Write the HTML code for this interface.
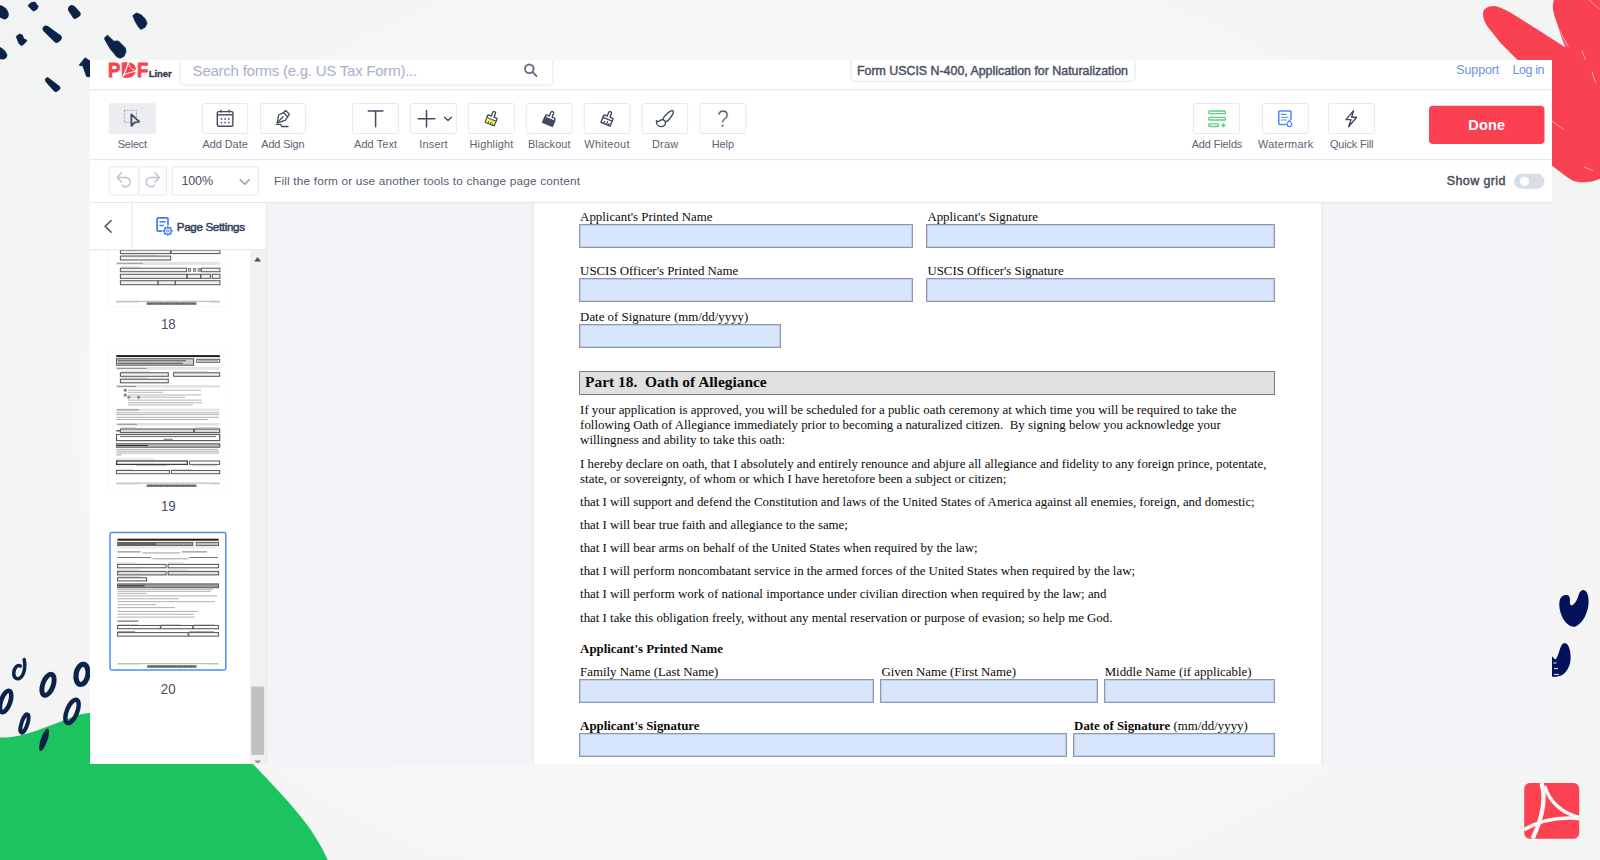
<!DOCTYPE html>
<html lang="en">
<head>
<meta charset="utf-8">
<title>Form USCIS N-400, Application for Naturalization</title>
<style>
*{box-sizing:border-box;margin:0;padding:0}
html,body{width:1600px;height:860px;overflow:hidden}
body{position:relative;font-family:"Liberation Sans",sans-serif;background:#f4f5f5;color:#3f4656}
#bg{position:absolute;left:0;top:0;width:1600px;height:860px;background:radial-gradient(ellipse 62% 78% at 50% 50%,#f9f9f9 0%,#f7f7f7 50%,#f5f5f5 78%,#f2f3f3 100%)}
svg{position:absolute;left:0;top:0;width:1600px;height:860px;overflow:hidden}
svg text{font-family:"Liberation Sans",sans-serif;white-space:pre}
#app{position:absolute;left:90px;top:60px;width:1462px;height:704px;background:#fff;overflow:hidden}
#side{position:absolute;left:0;top:143px;width:176px;height:561px;background:#fff}
#doc{position:absolute;left:177px;top:143px;width:1285px;height:561px;background:#f3f4f8}
#pg{position:absolute;left:267px;top:0;width:787px;height:561px;background:#fff;font-family:"Liberation Serif",serif;color:#000;font-size:12.86px;overflow:hidden;box-shadow:0 0 4px rgba(120,130,160,.18)}
#pg .t{position:absolute;white-space:nowrap;line-height:16px;color:#0a0a0a}
#pg .b{font-weight:bold}
#pg .f{position:absolute;background:#d7e6fd;border:1px solid #9496a2;box-shadow:inset 0 0 0 1px #b9cdf7}
#pg .hd{position:absolute;background:#e0e0e0;border:1px solid #7c7c7c}
</style>
</head>
<body>
<div id="bg"></div>
<svg id="deco" viewBox="0 0 1600 860">
<path d="M0 5.2 C4 5.5 8.6 10 8.8 14.6 C8.6 18 6 20 3.6 19.2 L0 17.4 Z" fill="#0b2348"/>
<path d="M28 5.4 L31.4 2.6 L35 2 L38.2 6.6 L36.8 9.4 L33.4 11 L30.6 8.6 Z" fill="#0b2348" stroke="#0b2348" stroke-width="0.8" stroke-linejoin="round"/>
<path transform="translate(73.9,11.6) rotate(52)" d="M-3.3 -3.9 L4.0 -4.6 Q7.2 -4.6 7.2 -0.9 L6.6 3.4 Q6.1 4.8 4.3 4.6 L-3.3 3.9 Q-7.2 3.5 -7.2 0 Q-7.2 -3.5 -3.3 -3.9 Z" fill="#0b2348"/>
<path d="M132.8 15.6 L136.6 13 L141 14.8 L145.4 19 L147 23.4 L145.2 27.2 L141 29.4 L138.8 27.4 L135.2 21.6 Z" fill="#0b2348" stroke="#0b2348" stroke-width="0.8" stroke-linejoin="round"/>
<path transform="translate(51.8,33.8) rotate(40)" d="M-7.6 -3.4 L7.8 -4.5 Q11.0 -4.5 11.0 -0.9 L10.1 3.4 Q9.3 4.7 6.6 4.5 L-7.6 3.4 Q-11.0 3.0 -11.0 0 Q-11.0 -3.0 -7.6 -3.4 Z" fill="#0b2348"/>
<path d="M16.2 36.4 L19.4 34 L22.4 35 L23.6 38.6 L27 40.4 L24.6 43.4 L21.4 45.8 L18.8 43.2 L17.4 39.6 Z" fill="#0b2348" stroke="#0b2348" stroke-width="0.8" stroke-linejoin="round"/>
<path d="M0 47 C3.4 48.4 6.8 52.4 7.3 55.4 C6.8 58 4.2 59.8 1.6 59.4 L0 59 Z" fill="#0b2348"/>
<path d="M104.8 37.6 L107.6 35.2 L113.8 41.2 L118.4 41 L125.4 48 L126 51.6 L124 56.4 L120 58.2 L116.8 56.8 L110 48.6 L104.8 39.6 Z" fill="#0b2348" stroke="#0b2348" stroke-width="0.8" stroke-linejoin="round"/>
<path d="M85 57.8 L90 61 L90 76.8 L86.6 76.4 L82.8 65.8 L79.2 65.2 Z" fill="#0b2348" stroke="#0b2348" stroke-width="0.8" stroke-linejoin="round"/>
<path transform="translate(52.2,84.4) rotate(43)" d="M-6.4 -2.6 L6.4 -3.8 Q9.0 -3.8 9.0 -0.8 L8.3 2.8 Q7.6 3.9 5.4 3.8 L-6.4 2.6 Q-9.0 2.4 -9.0 0 Q-9.0 -2.4 -6.4 -2.6 Z" fill="#0b2348"/>
<path d="M1483 13.4 C1483 8.6 1489 5 1496 6.2 C1502 7.6 1508 11 1514 14.8 L1533.5 27 L1565.6 47.6 C1562 39 1559.6 32 1557.6 25 C1554 15 1551 7 1554 0 L1600 0 L1600 178.8 C1592 182.6 1581 183.4 1573.4 181 C1566 176.6 1558 170.6 1550 164 L1540 150 L1540 70 L1517 59.6 L1500.6 43 L1487.4 26.6 C1484.6 22 1483 17.6 1483 13.4 Z" fill="#f94152"/>
<g stroke="#fbd3d7" stroke-width="0.7" fill="none" stroke-linecap="round"><path d="M1558.8 29 L1568.2 46.8"/><path d="M1582 51 L1585.4 59.4"/><path d="M1592.2 72 C1593 76 1594.4 80 1596 82.6"/><path d="M1552 121 L1563.4 129.2"/><path d="M1584.6 167.2 L1592.6 170.6"/><path d="M1589 0 L1600 9.4"/></g>
<path d="M0 737.6 C12 737.8 24 735 38.4 729.9 C50 725.8 64 720.2 76.7 715.5 C82 713.8 88 712.9 96 712.6 L256 700 L252.7 763.7 C268 780 291.6 804 307.6 825.4 C318 840 324 851 327.6 860 L0 860 Z" fill="#1bc45e"/>
<path d="M24.2 659.6 C25.6 665 24.8 674 20.6 677.6 C17 680.4 13.4 678 13.8 672.6 C14.2 667.6 17.6 664.2 20.4 666" fill="none" stroke="#0b2348" stroke-width="3.5" stroke-linecap="round"/>
<ellipse transform="translate(48,684.8) rotate(20)" rx="5.2" ry="11" fill="none" stroke="#0b2348" stroke-width="4.9"/>
<ellipse transform="translate(82,674.4) rotate(10)" rx="5.9" ry="10.2" fill="none" stroke="#0b2348" stroke-width="5.2"/>
<ellipse transform="translate(5.6,701.5) rotate(19)" rx="4.6" ry="11.2" fill="none" stroke="#0b2348" stroke-width="4.6"/>
<ellipse transform="translate(72,711.4) rotate(22)" rx="5.2" ry="12.4" fill="none" stroke="#0b2348" stroke-width="4.4"/>
<ellipse transform="translate(24.5,723.5) rotate(18)" rx="3" ry="9.6" fill="none" stroke="#0b2348" stroke-width="3.9"/>
<ellipse transform="translate(44.1,739.8) rotate(19)" rx="3.3" ry="11.8" fill="#0b2348"/>
<path d="M1565.6 595 C1568.4 594.6 1570 596.6 1570 599.6 C1569.6 602.6 1570 605 1571.4 605.6 C1575 604.6 1577.6 599 1578.6 595 C1579.6 591.6 1581.6 590 1583.6 590 C1587.6 590.6 1588.8 597 1588.6 603 C1588 612 1583.6 622.6 1575.6 626.4 C1571 627.6 1565.6 624 1562.2 617 C1559 610 1558 600.6 1561.4 597 C1562.6 595.8 1564 595.2 1565.6 595 Z" fill="#03125b"/>
<path d="M1551.8 655.6 C1553 658 1554.6 659.6 1556 659 C1558.6 656 1559.6 648 1562 644.6 C1563.6 642.8 1566.4 642.8 1567.8 645 C1570.4 649 1571 656 1570.4 661 C1569.6 667 1566.6 672 1562.6 674.8 C1559.6 676.6 1555.6 677 1551.8 676.8 Z" fill="#03125b"/>
<g stroke="#f3f4f8" stroke-width="1" fill="none"><path d="M1553.4 663 H1556.4"/><path d="M1554 668.6 H1558"/><path d="M1554 674.4 H1559"/></g>
<rect x="1524.2" y="783.1" width="55" height="55.6" rx="5.5" fill="#fb4252"/>
<g fill="none" stroke="#f5f6f6" stroke-linecap="butt"><path d="M1541.6 783 C1545 796 1545 812 1532.6 838.6" stroke-width="4.4"/><path d="M1544.6 786 C1549 800 1560 813 1579.4 817.4" stroke-width="3.6"/><path d="M1524 829.6 C1540 820.6 1560 816.6 1579.4 818.6" stroke-width="3.6"/></g>
</svg>
<div id="app">
  <div id="side"></div>
  <div id="doc">
    <div id="pg">
      <div class="t" style="left:46.1px;top:5.96px">Applicant's Printed Name</div>
      <div class="t" style="left:393.4px;top:5.96px">Applicant's Signature</div>
      <div class="f" style="left:45px;top:21px;width:334px;height:24px"></div>
      <div class="f" style="left:392px;top:21px;width:349px;height:24px"></div>
      <div class="t" style="left:46.1px;top:59.96px">USCIS Officer's Printed Name</div>
      <div class="t" style="left:393.4px;top:59.96px">USCIS Officer's Signature</div>
      <div class="f" style="left:45px;top:75px;width:334px;height:24px"></div>
      <div class="f" style="left:392px;top:75px;width:349px;height:24px"></div>
      <div class="t" style="left:46.1px;top:105.96px">Date of Signature (mm/dd/yyyy)</div>
      <div class="f" style="left:45px;top:121px;width:202px;height:24px"></div>
      <div class="hd" style="left:45px;top:168px;width:696px;height:24px"></div>
      <div class="t b" style="left:51.1px;top:171.09px;font-size:15.43px">Part 18.&nbsp; Oath of Allegiance</div>
      <div class="t" style="left:46.1px;top:198.96px">If your application is approved, you will be scheduled for a public oath ceremony at which time you will be required to take the</div>
      <div class="t" style="left:46.1px;top:213.96px">following Oath of Allegiance immediately prior to becoming a naturalized citizen.&nbsp; By signing below you acknowledge your</div>
      <div class="t" style="left:46.1px;top:228.96px">willingness and ability to take this oath:</div>
      <div class="t" style="left:46.1px;top:252.96px">I hereby declare on oath, that I absolutely and entirely renounce and abjure all allegiance and fidelity to any foreign prince, potentate,</div>
      <div class="t" style="left:46.1px;top:267.96px">state, or sovereignty, of whom or which I have heretofore been a subject or citizen;</div>
      <div class="t" style="left:46.1px;top:290.96px">that I will support and defend the Constitution and laws of the United States of America against all enemies, foreign, and domestic;</div>
      <div class="t" style="left:46.1px;top:313.96px">that I will bear true faith and allegiance to the same;</div>
      <div class="t" style="left:46.1px;top:336.96px">that I will bear arms on behalf of the United States when required by the law;</div>
      <div class="t" style="left:46.1px;top:359.96px">that I will perform noncombatant service in the armed forces of the United States when required by the law;</div>
      <div class="t" style="left:46.1px;top:382.96px">that I will perform work of national importance under civilian direction when required by the law; and</div>
      <div class="t" style="left:46.1px;top:406.96px">that I take this obligation freely, without any mental reservation or purpose of evasion; so help me God.</div>
      <div class="t b" style="left:46.1px;top:437.96px">Applicant's Printed Name</div>
      <div class="t" style="left:46.1px;top:460.96px">Family Name (Last Name)</div>
      <div class="t" style="left:347.4px;top:460.96px">Given Name (First Name)</div>
      <div class="t" style="left:570.7px;top:460.96px">Middle Name (if applicable)</div>
      <div class="f" style="left:45px;top:476px;width:295px;height:24px"></div>
      <div class="f" style="left:346px;top:476px;width:218px;height:24px"></div>
      <div class="f" style="left:570px;top:476px;width:171px;height:24px"></div>
      <div class="t b" style="left:46.1px;top:514.96px">Applicant's Signature</div>
      <div class="t" style="left:540.1px;top:514.96px"><b>Date of Signature</b> (mm/dd/yyyy)</div>
      <div class="f" style="left:45px;top:530px;width:488px;height:24px"></div>
      <div class="f" style="left:539px;top:530px;width:202px;height:24px"></div>
    </div>
  </div>
</div>
<svg id="thumbs" viewBox="0 0 1600 860">
<defs><clipPath id="sideclip"><rect x="90" y="250" width="160" height="514"/></clipPath></defs>
<g clip-path="url(#sideclip)">
<rect x="108.4" y="166.6" width="118.6" height="140.4" rx="2.4" fill="#eef0f6"/><rect x="109" y="167" width="117.6" height="139.6" rx="2" fill="#fff"/>
<rect x="120.4" y="250.2" width="50.0" height="3.4" fill="#f2f2f2" stroke="#5c5c5c" stroke-width="1.05"/>
<rect x="171.2" y="250.2" width="48.7" height="3.4" fill="#f2f2f2" stroke="#5c5c5c" stroke-width="1.05"/>
<path d="M122 255.2 H158" stroke="#bdbdbd" stroke-width="0.6" fill="none"/>
<rect x="120.4" y="256.1" width="50.3" height="3.9" fill="#f2f2f2" stroke="#5c5c5c" stroke-width="1.05"/>
<rect x="116" y="261.9" width="103.8" height="2.9" fill="#e3e3e3"/>
<path d="M117 263.4 H143" stroke="#8a8a8a" stroke-width="0.8" fill="none"/>
<path d="M121 267 H140" stroke="#c4c4c4" stroke-width="0.6" fill="none"/>
<rect x="120.4" y="268.2" width="66.2" height="3.5" fill="#f2f2f2" stroke="#5c5c5c" stroke-width="1.05"/>
<rect x="188.4" y="268.6" width="2.4" height="2.8" fill="#bbb" stroke="#5c5c5c" stroke-width="0.6"/>
<rect x="193.4" y="268.6" width="2.4" height="2.8" fill="#bbb" stroke="#5c5c5c" stroke-width="0.6"/>
<rect x="198" y="268.6" width="2.4" height="2.8" fill="#bbb" stroke="#5c5c5c" stroke-width="0.6"/>
<rect x="201.3" y="268.2" width="18.6" height="3.5" fill="#f2f2f2" stroke="#5c5c5c" stroke-width="1.05"/>
<rect x="120.4" y="274.3" width="66.4" height="4.1" fill="#f2f2f2" stroke="#5c5c5c" stroke-width="1.05"/>
<rect x="187.4" y="274.3" width="13.4" height="4.1" fill="#f2f2f2" stroke="#5c5c5c" stroke-width="1.05"/>
<rect x="201" y="274.3" width="9.4" height="4.1" fill="#f2f2f2" stroke="#5c5c5c" stroke-width="1.05"/>
<rect x="212.3" y="274.3" width="7.6" height="4.1" fill="#f2f2f2" stroke="#5c5c5c" stroke-width="1.05"/>
<rect x="120.4" y="280.7" width="37.6" height="4.0" fill="#f2f2f2" stroke="#5c5c5c" stroke-width="1.05"/>
<rect x="158.2" y="280.7" width="17.0" height="4.0" fill="#f2f2f2" stroke="#5c5c5c" stroke-width="1.05"/>
<rect x="175.4" y="280.7" width="44.5" height="4.0" fill="#f2f2f2" stroke="#5c5c5c" stroke-width="1.05"/>
<path d="M116 301.3 H219.8" stroke="#8c8c8c" stroke-width="0.7" fill="none"/>
<path d="M116 302.4 H138" stroke="#c9c9c9" stroke-width="0.6" fill="none"/>
<path d="M210 302.4 H219.8" stroke="#c9c9c9" stroke-width="0.6" fill="none"/>
<rect x="146.6" y="302.3" width="49.8" height="2.5" fill="#3a3a3a" opacity="0.85"/><path d="M146.6 303.6 H196.4" stroke="#fff" stroke-width="2.5" stroke-dasharray="0.5 1.3" opacity="0.45"/>
<text x="160.9" y="329.2" font-size="14.2" fill="#4a5164" textLength="14.8" lengthAdjust="spacingAndGlyphs">18</text>
<rect x="108.4" y="348.90000000000003" width="118.6" height="140.2" rx="2.4" fill="#eef0f6"/><rect x="109" y="349.3" width="117.6" height="139.4" rx="2" fill="#fff"/>
<rect x="116.3" y="355.1" width="103.5" height="2.0" fill="#1e1e1e"/>
<rect x="116.5" y="358.8" width="77.1" height="6.4" fill="#cfcfcf" stroke="#5c5c5c" stroke-width="1.1"/>
<path d="M118 360.8 H186" stroke="#444" stroke-width="0.9" fill="none"/>
<path d="M118 363.3 H183" stroke="#444" stroke-width="0.9" fill="none"/>
<rect x="196.8" y="359.3" width="22.9" height="3.0" fill="#f2f2f2" stroke="#5c5c5c" stroke-width="1"/>
<path d="M198.6 360.8 H218" stroke="#777" stroke-width="0.8" fill="none"/>
<rect x="116.3" y="367" width="103.5" height="2.7" fill="#e3e3e3"/>
<path d="M117 368.4 H147" stroke="#7a7a7a" stroke-width="0.8" fill="none"/>
<path d="M121 371.4 H150" stroke="#bbb" stroke-width="0.6" fill="none"/>
<path d="M174 371.4 H208" stroke="#bbb" stroke-width="0.6" fill="none"/>
<rect x="120.4" y="372.8" width="47.9" height="3.5" fill="#f2f2f2" stroke="#5c5c5c" stroke-width="1.1"/>
<rect x="173.6" y="372.8" width="46.1" height="3.5" fill="#f2f2f2" stroke="#5c5c5c" stroke-width="1.1"/>
<path d="M121 378 H147" stroke="#bbb" stroke-width="0.6" fill="none"/>
<rect x="120.4" y="379.2" width="47.9" height="3.6" fill="#f2f2f2" stroke="#5c5c5c" stroke-width="1.1"/>
<rect x="116.3" y="385" width="103.5" height="2.7" fill="#e3e3e3"/>
<path d="M117 386.4 H136" stroke="#7a7a7a" stroke-width="0.8" fill="none"/>
<rect x="123.8" y="388.9" width="2.8" height="2.6" fill="#777"/>
<rect x="123.8" y="393.8" width="2.8" height="2.6" fill="#777"/>
<rect x="127.4" y="396" width="2.8" height="2.6" fill="#777"/>
<rect x="137.2" y="396" width="2.8" height="2.6" fill="#777"/>
<path d="M128 390.2 H201" stroke="#a8a8a8" stroke-width="0.85" fill="none"/>
<path d="M128 392.3 H163" stroke="#a8a8a8" stroke-width="0.85" fill="none"/>
<path d="M128 395 H201" stroke="#a8a8a8" stroke-width="0.85" fill="none"/>
<path d="M128 397.2 H185" stroke="#a8a8a8" stroke-width="0.85" fill="none"/>
<path d="M128 400.1 H202" stroke="#a8a8a8" stroke-width="0.85" fill="none"/>
<path d="M128 402.8 H202" stroke="#a8a8a8" stroke-width="0.85" fill="none"/>
<path d="M128 404.9 H193" stroke="#a8a8a8" stroke-width="0.85" fill="none"/>
<rect x="116.3" y="408.6" width="103.5" height="2.6" fill="#e3e3e3"/>
<path d="M117 409.9 H139" stroke="#7a7a7a" stroke-width="0.8" fill="none"/>
<path d="M116.3 412.8 H219" stroke="#a2a2a2" stroke-width="0.85" fill="none"/>
<path d="M116.3 414.6 H219" stroke="#a2a2a2" stroke-width="0.85" fill="none"/>
<path d="M116.3 417.3 H219" stroke="#a2a2a2" stroke-width="0.85" fill="none"/>
<path d="M116.3 419.6 H208" stroke="#a2a2a2" stroke-width="0.85" fill="none"/>
<rect x="116.3" y="422.9" width="103.5" height="2.8" fill="#e3e3e3"/>
<path d="M117 424.3 H137" stroke="#7a7a7a" stroke-width="0.8" fill="none"/>
<path d="M121 427.5 H136" stroke="#bbb" stroke-width="0.6" fill="none"/>
<path d="M195 427.5 H219" stroke="#bbb" stroke-width="0.6" fill="none"/>
<rect x="120.4" y="429" width="73.2" height="3.6" fill="#d9d9d9" stroke="#5c5c5c" stroke-width="1.1"/>
<rect x="194.4" y="429" width="25.3" height="3.6" fill="#d9d9d9" stroke="#5c5c5c" stroke-width="1.1"/>
<path d="M116.3 430.8 H120" stroke="#333" stroke-width="1.2"/>
<rect x="116.5" y="434.5" width="103.2" height="6.1" fill="#fff" stroke="#5c5c5c" stroke-width="1.2"/>
<path d="M120 436.6 H216" stroke="#555" stroke-width="0.9" fill="none"/>
<path d="M163.4 439.3 H172.7" stroke="#555" stroke-width="0.8" fill="none"/>
<rect x="116.5" y="443.8" width="103.2" height="3.4" fill="#bdbdbd" stroke="#5c5c5c" stroke-width="1.1"/>
<path d="M117.4 445.5 H148" stroke="#333" stroke-width="1" fill="none"/>
<path d="M116.3 449.4 H218" stroke="#a2a2a2" stroke-width="0.85" fill="none"/>
<path d="M116.3 451.2 H219" stroke="#a2a2a2" stroke-width="0.85" fill="none"/>
<path d="M116.3 453.1 H219" stroke="#a2a2a2" stroke-width="0.85" fill="none"/>
<path d="M116.3 455 H121.6" stroke="#a2a2a2" stroke-width="0.85" fill="none"/>
<path d="M116.3 459 H153.5" stroke="#b9b9b9" stroke-width="0.6" fill="none"/>
<rect x="116.6" y="461" width="70.7" height="3.4" fill="#fff" stroke="#3c3c3c" stroke-width="1.3"/>
<rect x="189.6" y="461" width="30.1" height="3.4" fill="#fff" stroke="#5c5c5c" stroke-width="1"/>
<path d="M136 465.6 H167" stroke="#999" stroke-width="0.6" fill="none"/>
<path d="M192 465.6 H217" stroke="#aaa" stroke-width="0.6" fill="none"/>
<path d="M117 469.6 H133" stroke="#bbb" stroke-width="0.6" fill="none"/>
<path d="M172 469.6 H193" stroke="#bbb" stroke-width="0.6" fill="none"/>
<rect x="116.5" y="470.5" width="52.9" height="3.2" fill="#f2f2f2" stroke="#5c5c5c" stroke-width="1"/>
<rect x="171.3" y="470.5" width="48.4" height="3.2" fill="#f2f2f2" stroke="#5c5c5c" stroke-width="1"/>
<path d="M116 483.1 H219.8" stroke="#8c8c8c" stroke-width="0.7" fill="none"/>
<path d="M116 484.2 H138" stroke="#c9c9c9" stroke-width="0.6" fill="none"/>
<path d="M210 484.2 H219.8" stroke="#c9c9c9" stroke-width="0.6" fill="none"/>
<rect x="146.6" y="484.5" width="49.8" height="2.4" fill="#3a3a3a" opacity="0.85"/><path d="M146.6 485.7 H196.4" stroke="#fff" stroke-width="2.4" stroke-dasharray="0.5 1.3" opacity="0.45"/>
<text x="160.9" y="511.3" font-size="14.2" fill="#4a5164" textLength="14.8" lengthAdjust="spacingAndGlyphs">19</text>
<rect x="110" y="532.4000000000001" width="115.8" height="137.5" rx="1.6" fill="#fff" stroke="#4d8af8" stroke-width="1.5"/>
<rect x="117.4" y="538.7" width="101.2" height="2.0" fill="#1e1e1e"/>
<rect x="117.6" y="542.4" width="75.3" height="3.2" fill="#9c9c9c" stroke="#5c5c5c" stroke-width="1"/>
<path d="M118.6 544 H156" stroke="#2a2a2a" stroke-width="1" fill="none"/>
<rect x="196.4" y="542.4" width="22.1" height="3.2" fill="#ddd" stroke="#5c5c5c" stroke-width="1"/>
<path d="M198 544 H217" stroke="#888" stroke-width="0.7" fill="none"/>
<path d="M117.4 547.9 H216" stroke="#c6c6c6" stroke-width="0.6" fill="none"/>
<path d="M117.4 551.9 H140.6" stroke="#555" stroke-width="0.8" fill="none"/>
<path d="M142.4 552.9 H180.2" stroke="#777" stroke-width="0.7" fill="none"/>
<path d="M182 551.9 H207" stroke="#555" stroke-width="0.8" fill="none"/>
<path d="M117.4 557.5 H151" stroke="#555" stroke-width="0.8" fill="none"/>
<path d="M152.4 558.8 H188.4" stroke="#777" stroke-width="0.7" fill="none"/>
<path d="M189 557.5 H218" stroke="#555" stroke-width="0.8" fill="none"/>
<path d="M117.4 563 H137" stroke="#c0c0c0" stroke-width="0.6" fill="none"/>
<path d="M168 563 H184" stroke="#c0c0c0" stroke-width="0.6" fill="none"/>
<rect x="117.6" y="564.4" width="48.4" height="3.4" fill="#fff" stroke="#5c5c5c" stroke-width="1.1"/>
<rect x="168.1" y="564.4" width="50.4" height="3.4" fill="#fff" stroke="#5c5c5c" stroke-width="1.1"/>
<path d="M117.4 569.8 H140" stroke="#c0c0c0" stroke-width="0.6" fill="none"/>
<path d="M168 569.8 H188" stroke="#c0c0c0" stroke-width="0.6" fill="none"/>
<rect x="117.6" y="571.4" width="48.4" height="3.5" fill="#e0e0e0" stroke="#5c5c5c" stroke-width="1.1"/>
<rect x="168.1" y="571.4" width="50.4" height="3.5" fill="#e0e0e0" stroke="#5c5c5c" stroke-width="1.1"/>
<path d="M117.4 576.3 H141" stroke="#c0c0c0" stroke-width="0.6" fill="none"/>
<rect x="117.6" y="577.7" width="29.0" height="3.2" fill="#fff" stroke="#5c5c5c" stroke-width="1.1"/>
<rect x="117.6" y="583.9" width="100.9" height="3.8" fill="#9c9c9c" stroke="#5c5c5c" stroke-width="1"/>
<path d="M118.6 585.8 H144.6" stroke="#2a2a2a" stroke-width="1" fill="none"/>
<path d="M117.4 589.3 H213" stroke="#a2a2a2" stroke-width="0.85" fill="none"/>
<path d="M117.4 591.3 H211" stroke="#a2a2a2" stroke-width="0.85" fill="none"/>
<path d="M117.4 593.4 H146.5" stroke="#a2a2a2" stroke-width="0.85" fill="none"/>
<path d="M117.4 595.9 H217" stroke="#a2a2a2" stroke-width="0.85" fill="none"/>
<path d="M117.4 598.8 H179" stroke="#a2a2a2" stroke-width="0.85" fill="none"/>
<path d="M117.4 601.7 H215" stroke="#a2a2a2" stroke-width="0.85" fill="none"/>
<path d="M117.4 604.7 H156.4" stroke="#a2a2a2" stroke-width="0.85" fill="none"/>
<path d="M117.4 607.6 H175" stroke="#a2a2a2" stroke-width="0.85" fill="none"/>
<path d="M117.4 611.4 H197.6" stroke="#a2a2a2" stroke-width="0.85" fill="none"/>
<path d="M117.4 614.3 H194.2" stroke="#a2a2a2" stroke-width="0.85" fill="none"/>
<path d="M117.4 617.1 H194.8" stroke="#a2a2a2" stroke-width="0.85" fill="none"/>
<path d="M117.4 621.1 H138.4" stroke="#444" stroke-width="0.9" fill="none"/>
<path d="M117.4 624.5 H138" stroke="#c0c0c0" stroke-width="0.6" fill="none"/>
<path d="M161 624.5 H181" stroke="#c0c0c0" stroke-width="0.6" fill="none"/>
<path d="M194 624.5 H215" stroke="#c0c0c0" stroke-width="0.6" fill="none"/>
<rect x="117.6" y="625.5" width="42.8" height="3.2" fill="#fff" stroke="#5c5c5c" stroke-width="1.1"/>
<rect x="160.8" y="625.5" width="32.1" height="3.2" fill="#fff" stroke="#5c5c5c" stroke-width="1.1"/>
<rect x="193.2" y="625.5" width="25.3" height="3.2" fill="#fff" stroke="#5c5c5c" stroke-width="1.1"/>
<path d="M117.4 631.6 H135" stroke="#666" stroke-width="0.7" fill="none"/>
<path d="M189 631.6 H214" stroke="#777" stroke-width="0.7" fill="none"/>
<rect x="117.6" y="632.6" width="70.7" height="3.5" fill="#fff" stroke="#5c5c5c" stroke-width="1.1"/>
<rect x="188.7" y="632.6" width="29.8" height="3.5" fill="#fff" stroke="#5c5c5c" stroke-width="1.1"/>
<path d="M117.4 663.7 H218.6" stroke="#8c8c8c" stroke-width="0.7" fill="none"/>
<path d="M117.4 664.8 H139" stroke="#c9c9c9" stroke-width="0.6" fill="none"/>
<path d="M209 664.8 H218.6" stroke="#c9c9c9" stroke-width="0.6" fill="none"/>
<rect x="147.1" y="665.2" width="49.4" height="2.6" fill="#3a3a3a" opacity="0.85"/><path d="M147.1 666.5 H196.5" stroke="#fff" stroke-width="2.6" stroke-dasharray="0.5 1.3" opacity="0.45"/>
<text x="160.8" y="693.5" font-size="14.2" fill="#4a5164" textLength="14.8" lengthAdjust="spacingAndGlyphs">20</text>
</g>
</svg>
<svg id="ui" viewBox="0 0 1600 860">
<defs><clipPath id="appclip"><rect x="90" y="60" width="1462" height="704"/></clipPath></defs>
<g clip-path="url(#appclip)">
<rect x="90" y="89" width="1462" height="1.2" fill="#e6e8f0"/>
<text transform="translate(0,77.35) scale(0.9,1)" x="120.1 134.5 152.1" font-size="20.6" font-weight="bold" fill="#fb4252" stroke="#fb4252" stroke-width="0.85">PDF</text>
<path d="M124 62.6 H128.6 C138.4 62.6 138.4 77.4 128.6 77.4 H124 Z" fill="#fb4252"/>
<g fill="none" stroke="#fff" stroke-linecap="butt"><path d="M128.4 61.5 C127.6 66 125.6 71 122.2 77.8" stroke-width="1.3"/><path d="M128.2 62.6 C129 66.4 131.2 69.8 136.6 70.6" stroke-width="1"/><path d="M123 76 C126.6 73 131.6 71.8 136.6 71.4" stroke-width="1"/></g>
<text x="148.8" y="77.1" font-size="9.5" fill="#2b3453" textLength="23" lengthAdjust="spacing" font-weight="bold" stroke="#2b3453" stroke-width="0.3" >Liner</text>
<rect x="179.8" y="50" width="373.2" height="35.2" rx="4.5" fill="#fff" stroke="#e2e6f0" stroke-width="1"/>
<text x="192.6" y="76.1" font-size="15" fill="#a8b0c8" textLength="224.6" lengthAdjust="spacing" >Search forms (e.g. US Tax Form)...</text>
<g fill="none" stroke="#666d83" stroke-width="1.9" stroke-linecap="round"><circle cx="529.3" cy="68.8" r="4.3"/><path d="M532.6 72.2 L536.4 76"/></g>
<rect x="850.8" y="50" width="284.3" height="31.3" rx="4" fill="#fff" stroke="#e2e6f0" stroke-width="1"/>
<text x="857" y="75.1" font-size="12.4" fill="#4a5164" textLength="271" lengthAdjust="spacing" stroke="#4a5164" stroke-width="0.45" >Form USCIS N-400, Application for Naturalization</text>
<text x="1456.3" y="74" font-size="12.5" fill="#6d93e6" textLength="43" lengthAdjust="spacing" >Support</text>
<text x="1512.5" y="74" font-size="12.5" fill="#6d93e6" textLength="32" lengthAdjust="spacing" >Log in</text>
<rect x="90" y="159" width="1462" height="1.2" fill="#e6e8f0"/>
<rect x="109.3" y="103.5" width="46.30" height="30.00" rx="1.8" fill="#ecedf1" stroke="#ecedf1" stroke-width="1"/>
<rect x="124.3" y="110.3" width="12.2" height="12" fill="none" stroke="#8d93a4" stroke-width="1" stroke-dasharray="1.4 1.5"/>
<path d="M131.4 114.4 L139.2 121.6 L134.6 122.5 L131.4 125.8 Z" fill="#ecedf1" stroke="#434a62" stroke-width="1.8" stroke-linejoin="round"/>
<rect x="202.5" y="103.5" width="45.20" height="30.00" rx="1.8" fill="#fff" stroke="#e7e9f1" stroke-width="1"/>
<g fill="none" stroke="#434a62" stroke-width="1.4" stroke-linejoin="round"><rect x="217.3" y="111.6" width="15.6" height="14.6" rx="1.2"/><path d="M217.3 114.8 H232.9"/><path d="M221 110.2 V112 M229.2 110.2 V112" stroke-linecap="round"/></g>
<circle cx="221.5" cy="118.9" r="0.85" fill="#434a62"/>
<circle cx="221.5" cy="122.6" r="0.85" fill="#434a62"/>
<circle cx="225.1" cy="118.9" r="0.85" fill="#434a62"/>
<circle cx="225.1" cy="122.6" r="0.85" fill="#434a62"/>
<circle cx="228.7" cy="118.9" r="0.85" fill="#434a62"/>
<circle cx="228.7" cy="122.6" r="0.85" fill="#434a62"/>
<rect x="260.5" y="103.5" width="44.90" height="30.00" rx="1.8" fill="#fff" stroke="#e7e9f1" stroke-width="1"/>
<g fill="none" stroke="#434a62" stroke-width="1.3" stroke-linejoin="round" stroke-linecap="round"><path d="M277.2 122.8 L278.6 115 L283.6 112.6 L287.6 116.8 L285.2 120.4 Z"/><path d="M283.6 112.6 L285.6 110.4 L289.4 114.2 L287.6 116.8"/><path d="M277.4 122.6 L283 116.8"/><path d="M276.4 124.3 H280.4 L281.6 126.5 H288"/></g>
<rect x="352.5" y="103.5" width="45.90" height="30.00" rx="1.8" fill="#fff" stroke="#e7e9f1" stroke-width="1"/>
<path d="M368.2 111 H382.9 M375.6 111 V126.8" fill="none" stroke="#434a62" stroke-width="1.5" stroke-linecap="round"/>
<rect x="410.5" y="103.5" width="45.90" height="30.00" rx="1.8" fill="#fff" stroke="#e7e9f1" stroke-width="1"/>
<path d="M418.2 118.7 H434.8 M426.5 110.5 V126.9" fill="none" stroke="#434a62" stroke-width="1.5" stroke-linecap="round"/>
<path d="M444.6 117.2 L448 120.4 L451.4 117.2" fill="none" stroke="#434a62" stroke-width="1.4" stroke-linecap="round" stroke-linejoin="round"/>
<rect x="468.4" y="103.5" width="45.90" height="30.00" rx="1.8" fill="#fff" stroke="#e7e9f1" stroke-width="1"/>
<g transform="translate(491.8,118.6) rotate(22)" fill="none" stroke="#434a62" stroke-width="1.4" stroke-linejoin="round" stroke-linecap="round"><path d="M-5 0.4 V-1.2 a1 1 0 0 1 1 -1 H-1.5 V-6 a1.5 1.6 0 0 1 3 0 V-2.2 H4 a1 1 0 0 1 1 1 V0.4"/><path d="M-5 0.8 H5 V5.9 H-5 Z" fill="#f3ee3c" stroke="#434a62" stroke-width="1"/><path d="M-1.8 5.9 V4 M0.8 5.9 V3.4 M3 5.9 V4.4" stroke="#434a62" stroke-width="0.9"/></g>
<rect x="526.3" y="103.5" width="45.80" height="30.00" rx="1.8" fill="#fff" stroke="#e7e9f1" stroke-width="1"/>
<g transform="translate(549.9,118.6) rotate(22)" fill="none" stroke="#434a62" stroke-width="1.4" stroke-linejoin="round" stroke-linecap="round"><path d="M-5 0.4 V-1.2 a1 1 0 0 1 1 -1 H-1.5 V-6 a1.5 1.6 0 0 1 3 0 V-2.2 H4 a1 1 0 0 1 1 1 V0.4"/><path d="M-5.3 0.6 H5.3 V6.2 H-5.3 Z" fill="#434a62"/></g>
<rect x="584.2" y="103.5" width="45.70" height="30.00" rx="1.8" fill="#fff" stroke="#e7e9f1" stroke-width="1"/>
<g transform="translate(607.8,118.6) rotate(22)" fill="none" stroke="#434a62" stroke-width="1.4" stroke-linejoin="round" stroke-linecap="round"><path d="M-5 0.4 V-1.2 a1 1 0 0 1 1 -1 H-1.5 V-6 a1.5 1.6 0 0 1 3 0 V-2.2 H4 a1 1 0 0 1 1 1 V0.4"/><path d="M-5 0.6 H5 V6 H-5 Z"/><path d="M-2 6 V3.8 M0.8 6 V3 M3 6 V4.2" stroke-width="1.2"/></g>
<rect x="642.1" y="103.5" width="45.50" height="30.00" rx="1.8" fill="#fff" stroke="#e7e9f1" stroke-width="1"/>
<g fill="none" stroke="#434a62" stroke-width="1.4" stroke-linecap="round" stroke-linejoin="round"><path d="M663.4 119.6 C662.4 117.2 668.6 111.8 671.6 110.6 C674 110.2 673.6 112.8 672.6 114.4 C670.6 117.8 667.4 121.8 665.4 121.8"/><path d="M656.4 120.6 C657.4 122 658.6 121.6 659.6 120.8 C661.6 119.2 664.6 119.6 665.4 121.8 C666.2 124.6 663.4 127 660.6 126.6 C657.8 126.4 656.2 123.6 656.4 120.6 Z"/></g>
<rect x="700" y="103.5" width="45.80" height="30.00" rx="1.8" fill="#fff" stroke="#e7e9f1" stroke-width="1"/>
<text transform="translate(722.9,127.1) scale(0.92,1)" font-size="23" fill="#434a62" stroke="#fff" stroke-width="0.45" text-anchor="middle">?</text>
<rect x="1193.5" y="103.5" width="46.00" height="30.00" rx="1.8" fill="#fff" stroke="#e7e9f1" stroke-width="1"/>
<g fill="none" stroke="#5ccf80" stroke-width="1.4"><rect x="1208.8" y="111" width="16.6" height="2.6" rx="0.8"/><rect x="1208.8" y="117.4" width="16.6" height="2.6" rx="0.8"/><rect x="1208.8" y="123.9" width="9.6" height="2.6" rx="0.8"/></g>
<path d="M1223.4 123.2 L1224.2 124.5 L1225.6 125.2 L1224.2 126 L1223.4 127.3 L1222.6 126 L1221.2 125.2 L1222.6 124.5 Z" fill="#5ccf80" stroke="#5ccf80" stroke-width="0.6"/>
<rect x="1262.4" y="103.5" width="46.00" height="30.00" rx="1.8" fill="#fff" stroke="#e7e9f1" stroke-width="1"/>
<g fill="none" stroke="#4f87f7" stroke-linecap="round"><path d="M1286 124.4 H1279.6 a0.8 0.8 0 0 1 -0.8 -0.8 V111.8 a0.8 0.8 0 0 1 0.8 -0.8 H1290.2 a0.8 0.8 0 0 1 0.8 0.8 V119.4" stroke-width="1.5"/><path d="M1281.4 114.4 H1286 M1281.4 117.2 H1288.2 M1281.4 120 H1286.6" stroke-width="1.1"/><path d="M1289.4 120.4 C1290.4 121.8 1291.8 122.8 1291.8 124.2 a2.4 2.4 0 0 1 -4.8 0 C1287 122.8 1288.4 121.8 1289.4 120.4 Z" stroke-width="1.3" fill="#fff"/></g>
<rect x="1328.6" y="103.5" width="45.90" height="30.00" rx="1.8" fill="#fff" stroke="#e7e9f1" stroke-width="1"/>
<path d="M1353.6 110.6 L1346 119.6 L1351 119.6 L1348.6 126.8 L1356.6 117.2 L1351.6 117.2 Z" fill="none" stroke="#434a62" stroke-width="1.4" stroke-linejoin="round"/>
<text x="117.8" y="147.8" font-size="10.9" fill="#5b6277" textLength="29.2" lengthAdjust="spacing" >Select</text>
<text x="202.4" y="147.8" font-size="10.9" fill="#5b6277" textLength="45.3" lengthAdjust="spacing" >Add Date</text>
<text x="261.3" y="147.8" font-size="10.9" fill="#5b6277" textLength="43.2" lengthAdjust="spacing" >Add Sign</text>
<text x="354.0" y="147.8" font-size="10.9" fill="#5b6277" textLength="43" lengthAdjust="spacing" >Add Text</text>
<text x="419.3" y="147.8" font-size="10.9" fill="#5b6277" textLength="28.2" lengthAdjust="spacing" >Insert</text>
<text x="469.5" y="147.8" font-size="10.9" fill="#5b6277" textLength="43.8" lengthAdjust="spacing" >Highlight</text>
<text x="528.0" y="147.8" font-size="10.9" fill="#5b6277" textLength="42.5" lengthAdjust="spacing" >Blackout</text>
<text x="584.3" y="147.8" font-size="10.9" fill="#5b6277" textLength="45.2" lengthAdjust="spacing" >Whiteout</text>
<text x="652.0" y="147.8" font-size="10.9" fill="#5b6277" textLength="26" lengthAdjust="spacing" >Draw</text>
<text x="711.8" y="147.8" font-size="10.9" fill="#5b6277" textLength="22.2" lengthAdjust="spacing" >Help</text>
<text x="1191.7" y="147.8" font-size="10.9" fill="#5b6277" textLength="50.6" lengthAdjust="spacing" >Add Fields</text>
<text x="1258.1" y="147.8" font-size="10.9" fill="#5b6277" textLength="55" lengthAdjust="spacing" >Watermark</text>
<text x="1330.0" y="147.8" font-size="10.9" fill="#5b6277" textLength="43.5" lengthAdjust="spacing" >Quick Fill</text>
<rect x="1429" y="105.8" width="115.5" height="38.2" rx="4" fill="#fb4151"/>
<text x="1468.3" y="129.6" font-size="14.5" fill="#fff" textLength="36.7" lengthAdjust="spacing" font-weight="bold" >Done</text>
<rect x="90" y="202" width="1462" height="1.2" fill="#e6e8f0"/>
<rect x="109.3" y="166.8" width="29.00" height="28.40" rx="1.8" fill="#fff" stroke="#e7e9f1" stroke-width="1"/>
<rect x="139" y="166.8" width="27.50" height="28.40" rx="1.8" fill="#fff" stroke="#e7e9f1" stroke-width="1"/>
<rect x="172.3" y="166.8" width="86.20" height="28.40" rx="1.8" fill="#fff" stroke="#e7e9f1" stroke-width="1"/>
<g fill="none" stroke="#bfc3cf" stroke-width="1.5" stroke-linecap="round" stroke-linejoin="round"><path d="M121.4 172.8 L117.2 177.4 L121.4 182"/><path d="M117.6 177.4 H125.6 a4.7 4.7 0 1 1 -3.4 8"/><path d="M155.1 172.8 L159.3 177.4 L155.1 182"/><path d="M158.9 177.4 H150.9 a4.7 4.7 0 1 0 3.4 8"/></g>
<text x="181.5" y="185.3" font-size="12.5" fill="#4a5164" textLength="31.5" lengthAdjust="spacing" >100%</text>
<path d="M240.2 179.8 L244.7 184.2 L249.2 179.8" fill="none" stroke="#9399ab" stroke-width="1.4" stroke-linecap="round" stroke-linejoin="round"/>
<text x="274" y="185.2" font-size="11.8" fill="#555c70" textLength="306" lengthAdjust="spacing" >Fill the form or use another tools to change page content</text>
<text x="1446.8" y="185.3" font-size="12.5" fill="#4a5164" textLength="58.6" lengthAdjust="spacing" stroke="#4a5164" stroke-width="0.5" >Show grid</text>
<rect x="1514" y="173.8" width="30.5" height="15" rx="7.5" fill="#d9dde8"/><circle cx="1524.4" cy="181.3" r="4.6" fill="#fff"/>
<rect x="90" y="203.2" width="176" height="46" fill="#fff"/>
<rect x="90" y="249" width="176.5" height="1.2" fill="#e6e8f0"/>
<rect x="131.6" y="203" width="1.1" height="46" fill="#e6e8f0"/>
<rect x="266" y="203" width="1.1" height="561" fill="#e6e8f0"/>
<path d="M111 220.6 L105.2 226.4 L111 232.2" fill="none" stroke="#5a6178" stroke-width="1.7" stroke-linecap="round" stroke-linejoin="round"/>
<g fill="none" stroke="#3f7af3" stroke-linecap="round" stroke-linejoin="round"><path d="M163 231.2 H158.2 a1.1 1.1 0 0 1 -1.1 -1.1 V218.9 a1.1 1.1 0 0 1 1.1 -1.1 H166.9 a1.1 1.1 0 0 1 1.1 1.1 V224.6" stroke-width="1.7"/><path d="M160 221.8 H165.2 M160 225.4 H163.2" stroke-width="1.5"/></g>
<circle cx="167.8" cy="230.9" r="5.6" fill="#fff"/>
<g fill="none" stroke="#3f7af3"><circle cx="167.8" cy="230.9" r="3.3" stroke-width="1.3"/><path d="M171.50 230.90 L172.70 230.90 M170.42 233.52 L171.26 234.36 M167.80 234.60 L167.80 235.80 M165.18 233.52 L164.34 234.36 M164.10 230.90 L162.90 230.90 M165.18 228.28 L164.34 227.44 M167.80 227.20 L167.80 226.00 M170.42 228.28 L171.26 227.44 " stroke-width="1.7"/><circle cx="167.8" cy="230.9" r="1.2" stroke-width="0.9"/></g>
<text x="176.8" y="231" font-size="11.6" fill="#343f5e" textLength="68.2" lengthAdjust="spacing" stroke="#343f5e" stroke-width="0.5" >Page Settings</text>
<rect x="250" y="250" width="16" height="514" fill="#f1f1f1"/>
<rect x="251.3" y="686.6" width="12.9" height="68.3" fill="#c1c1c1"/>
<path d="M254.2 261.4 L257.6 257 L261 261.4 Z" fill="#505050"/>
<path d="M254.4 760.4 L257.8 763.6 L261.2 760.4 Z" fill="#8a8a8a"/>
</g>
</svg>
<svg id="deco2" viewBox="0 0 1600 860">

</svg>
</body>
</html>
